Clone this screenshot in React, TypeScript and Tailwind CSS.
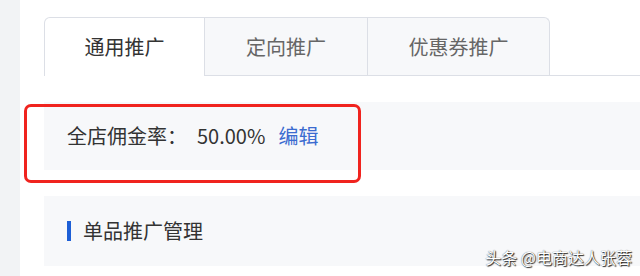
const font = { fontFamily: '"Noto Sans CJK SC", "Noto Sans", sans-serif' };

const tabs = [
  { label: "通用推广", w: "w-[161px]", active: true },
  { label: "定向推广", w: "w-[163px]", active: false },
  { label: "优惠券推广", w: "w-[182px]", active: false },
];

export default function App() {
  return (
    <div className="relative flex h-[276px] w-[640px] overflow-hidden bg-white" style={font}>
      <div className="w-[20px] shrink-0 bg-[#f2f3f5]" />
      <div className="flex flex-1 flex-col pl-[24px] pt-[17px]">
        <div className="flex h-[59px] border-b border-[#dcdfe6]">
          {tabs.map((t, i) => (
            <div
              key={t.label}
              className={
                "flex items-center justify-center border-t border-r border-[#dcdfe6] text-[20px] " +
                t.w +
                (i === 0 ? " rounded-tl-[6px] border-l" : "") +
                (i === tabs.length - 1 ? " rounded-tr-[6px]" : "") +
                (t.active
                  ? " -mb-px bg-white text-[#333333]"
                  : " bg-[#f7f8fa] text-[#666666]")
              }
            >
              {t.label}
            </div>
          ))}
        </div>

        <div className="mt-[26px] flex h-[68px] items-center bg-[#f7f8fa] pl-[23px] text-[20px] text-[#333333]">
          <span>全店佣金率：</span>
          <span className="ml-[10px]">50.00%</span>
          <span className="ml-[13px] text-[#3b6bd0]">编辑</span>
        </div>

        <div className="mt-[26px] flex h-[70px] items-center bg-[#f7f8fa] pl-[23px]">
          <div className="h-[20px] w-[4px] bg-[#1d5fd6]" />
          <span className="ml-[12px] text-[20px] text-[#333333]">单品推广管理</span>
        </div>
      </div>

      <div className="absolute left-[24px] top-[104px] h-[79px] w-[337px] rounded-[7px] border-[3px] border-[#f0231e]" />

      <div className="absolute right-[8px] top-[246px] text-[16px] leading-[22px] text-white [text-shadow:1px_1px_1px_rgba(0,0,0,0.85),0_0_1px_rgba(0,0,0,0.7)]">
        头条 @电商达人张蓉
      </div>
    </div>
  );
}
